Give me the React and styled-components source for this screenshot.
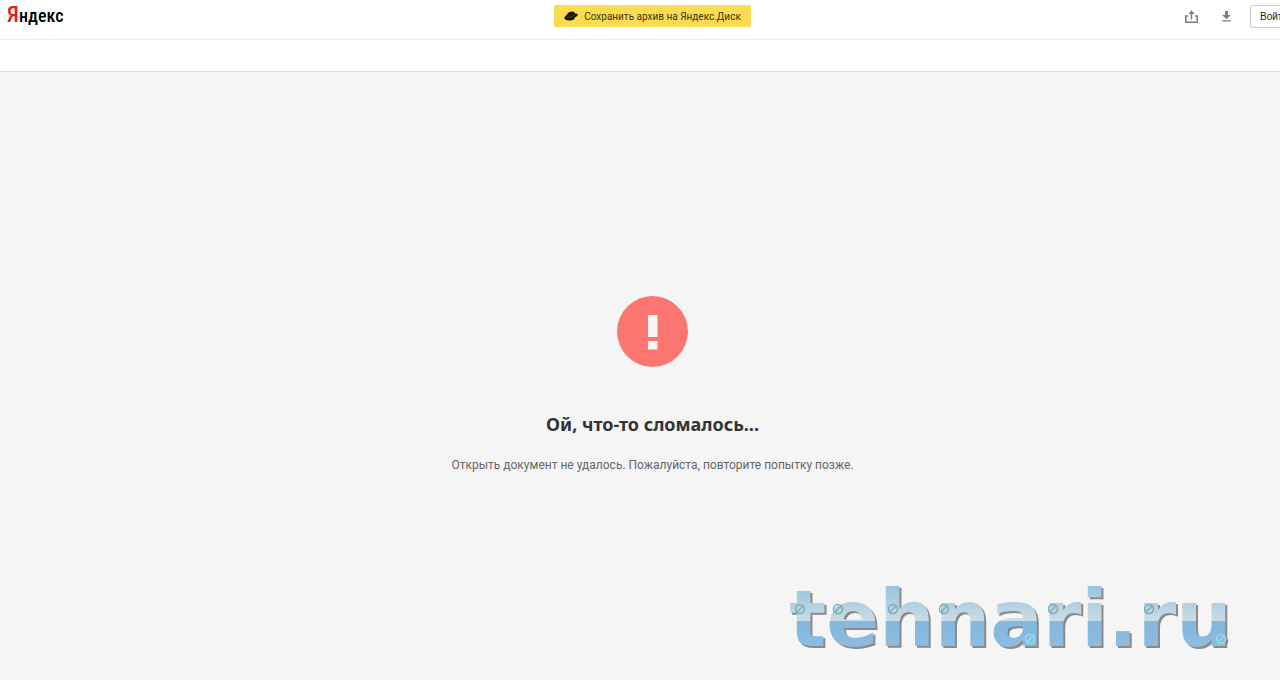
import React from 'react'
import styled, { createGlobalStyle } from 'styled-components'

const screws = [
    [11, 40], [49, 40], [104, 40], [155, 40], [264, 40], [360, 40],
]

const lightScrews = [[241, 70], [432, 70]]

function Screw({ x, y, color }) {
    return (
        <g stroke={color} strokeWidth="1.5" fill="none">
            <circle cx={x} cy={y} r="4.5" />
            <path d={`M${x - 3} ${y + 3}L${x + 3} ${y - 3}`} />
        </g>
    )
}

function ShareIcon() {
    return (
        <svg width="13" height="13" viewBox="0 0 13 13" fill="none" stroke="#7d7d7d" strokeWidth="1.5" aria-hidden="true">
            <path d="M3 6H.8v6.200h11.400V6H10" />
            <path d="M6.500 9.500V2" />
            <path d="M3.500 4L6.500.3 9.500 4z" fill="#7d7d7d" stroke="none" />
        </svg>
    )
}

function DownloadIcon() {
    return (
        <svg width="9" height="11" viewBox="0 0 9 11" fill="#7d7d7d" aria-hidden="true">
            <path d="M3 0h3v4h2.800L4.500 8.200.2 4H3zM.3 9.200h8.400v1.300H.3z" />
        </svg>
    )
}

function DiskIcon() {
    return (
        <svg width="14" height="10" viewBox="0 0 14 10" aria-hidden="true">
            <path d="M2.900 3.800C3.500 1.700 6 .3 8.200.5c1.500.1 2.500.9 2.700 2 1.700 0 2.900.4 2.800 1.400-.1 1-1.300 1.800-2.900 2.400.2 1.700-1.400 2.900-4 3.200C4 9.800.5 9 .4 7.300.3 6 1.400 4.800 2.900 3.800z" fill="#1b1703" />
            <path d="M3.500 6.300c2.300.3 5-.9 7.300-2.900" fill="none" stroke="#6b5c20" strokeWidth=".6" />
        </svg>
    )
}

function App() {
    return (
        <Page>
            <GlobalStyle />
            <Header>
                <Side>
                    <Logo href="#"><span>Я</span>ндекс</Logo>
                </Side>
                <SaveButton type="button">
                    <DiskIcon />
                    Сохранить архив на Яндекс.Диск
                </SaveButton>
                <Actions>
                    <IconButton type="button" aria-label="Поделиться"><ShareIcon /></IconButton>
                    <IconButton type="button" aria-label="Скачать"><DownloadIcon /></IconButton>
                    <LoginButton type="button">Войти</LoginButton>
                </Actions>
            </Header>
            <Toolbar />
            <Main>
                <svg width="71" height="71" viewBox="0 0 71 71" aria-hidden="true">
                    <circle cx="35.5" cy="35.5" r="35.5" fill="#fc7671" />
                    <path d="M31 19h9.500v22H31zM31 45h9.500v8.500H31z" fill="#f8f6f3" />
                </svg>
                <Title>Ой, что-то сломалось...</Title>
                <Message>Открыть документ не удалось. Пожалуйста, повторите попытку позже.</Message>
            </Main>
            <Watermark width="450" height="90" viewBox="0 0 450 90">
                <defs>
                    <linearGradient id="steel" gradientUnits="userSpaceOnUse" x1="0" y1="12" x2="0" y2="78">
                        <stop offset="0" stopColor="#91bfdf" />
                        <stop offset=".35" stopColor="#b2d0e0" />
                        <stop offset=".6" stopColor="#cadde5" />
                        <stop offset=".6" stopColor="#83b7dd" />
                        <stop offset="1" stopColor="#8dbce0" />
                    </linearGradient>
                </defs>
                <WatermarkText x="0" y="77">tehnari.ru</WatermarkText>
                {screws.map(([x, y]) => <Screw key={x} x={x} y={y} color="#79acb5" />)}
                {lightScrews.map(([x, y]) => <Screw key={x} x={x} y={y} color="#8fdcf0" />)}
            </Watermark>
        </Page>
    )
}

export default App

const GlobalStyle = createGlobalStyle`
    body {
        margin: 0;
        background-color: #f5f5f5;
        overflow: hidden;
    }
`
const Page = styled.div`
    width: calc(100% + 25px);
    min-height: 100vh;
    display: flex;
    flex-direction: column;
    font-family: Roboto, "Liberation Sans", sans-serif;
`
const Header = styled.header`
    display: flex;
    align-items: flex-start;
    height: 39px;
    background-color: white;
    border-bottom: 1px solid #ececec;
`
const Side = styled.div`
    flex: 1;
    display: flex;
    padding-left: 7px;
`
const Logo = styled.a`
    font-family: "Roboto Condensed", "Open Sans Condensed", sans-serif;
    font-size: 18px;
    font-weight: 500;
    line-height: 30px;
    color: black;
    text-decoration: none;

    span {
        color: #e02020;
        font-size: 22px;
    }
`
const SaveButton = styled.button`
    display: flex;
    align-items: center;
    gap: 6px;
    height: 22px;
    margin-top: 5px;
    padding: 0 10px;
    border: none;
    border-radius: 2px;
    background-color: #fbdb52;
    color: #3c3413;
    font-family: inherit;
    font-size: 10px;
`
const Actions = styled(Side)`
    justify-content: flex-end;
    align-items: center;
    gap: 8px;
    padding: 5px 7px 0 0;
`
const IconButton = styled.button`
    display: flex;
    align-items: center;
    justify-content: center;
    width: 27px;
    height: 22px;
    padding: 0;
    border: none;
    background: none;
`
const LoginButton = styled.button`
    height: 23px;
    margin-left: 2px;
    padding: 0 9px;
    border: 1px solid #ccc;
    border-radius: 2px;
    background-color: white;
    color: #222;
    font-family: "Liberation Sans", Arial, sans-serif;
    font-size: 10px;
`
const Toolbar = styled.div`
    height: 31px;
    background-color: white;
    border-bottom: 1px solid #dcdcdc;
`
const Main = styled.main`
    flex: 1;
    display: flex;
    flex-direction: column;
    align-items: center;
    padding-top: 224px;
    background-color: #f5f5f5;
`
const Title = styled.h1`
    margin: 43px 0 0;
    font-family: "Noto Sans", sans-serif;
    font-size: 18px;
    line-height: 28px;
    color: #333;
`
const Message = styled.p`
    margin: 17px 0 0;
    font-size: 12px;
    line-height: 20px;
    color: #666;
`
const Watermark = styled.svg`
    position: fixed;
    right: 41px;
    bottom: 21px;
    filter: drop-shadow(2px 2px 0 #8a8a8a);
`
const WatermarkText = styled.text`
    font-family: "DejaVu Sans", sans-serif;
    font-size: 78px;
    font-weight: bold;
    fill: url(#steel);
`
